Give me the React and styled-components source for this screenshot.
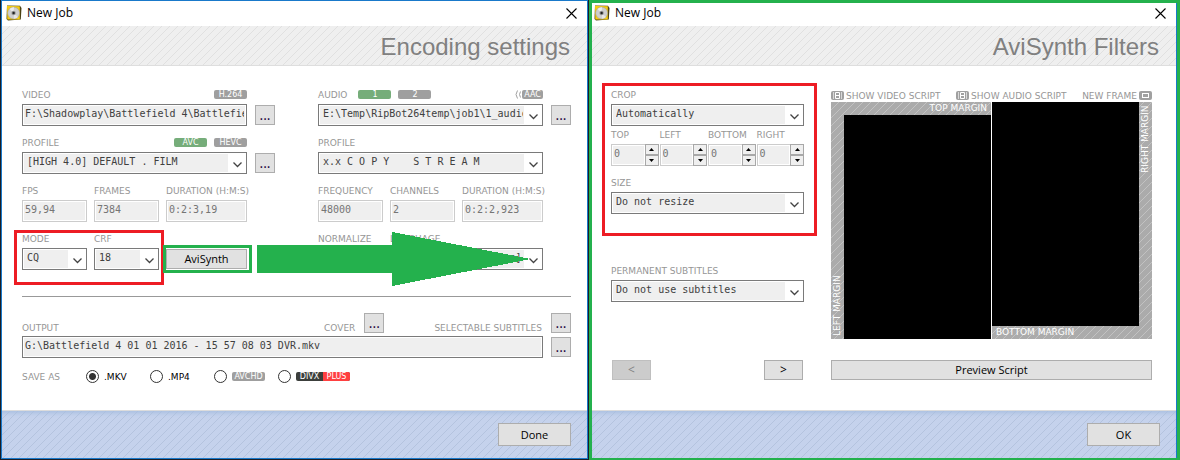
import styled, { createGlobalStyle, css } from "styled-components";

const App = () => {
  return (
    <>
      <GlobalStyle />
      <Desktop>
        <EncodingWindow />
        <FiltersWindow />
      </Desktop>
    </>
  );
};

const WindowBar = ({ compact }) => (
  <TitleBar $compact={compact}>
    <DiscIcon />
    <WindowName>New Job</WindowName>
    <CloseButton type="button" aria-label="Close">
      <svg width="11" height="11" viewBox="0 0 11 11">
        <path d="M0.5 0.5L10.5 10.5M10.5 0.5L0.5 10.5" stroke="#000" strokeWidth="1.1" />
      </svg>
    </CloseButton>
  </TitleBar>
);

const DiscIcon = () => (
  <svg width="16" height="16" viewBox="0 0 16 16" aria-hidden="true">
    <path d="M1 0.5L14 0.8L15.5 3L14.8 14.5L2 15.5L0.5 14Z" fill="#4a4012" />
    <path d="M1 0.8L13.8 1.2L13.8 14.4L1.3 14.6Z" fill="#f5cc14" />
    <circle cx="7.6" cy="8" r="6" fill="#cecece" stroke="#a09a80" strokeWidth="0.5" />
    <path d="M7.6 8L3.5 4A6 6 0 0 1 8 2.2Z" fill="#ececec" />
    <path d="M7.6 8L12 12A6 6 0 0 1 8 13.8Z" fill="#e6e6e6" />
    <circle cx="7.6" cy="8" r="2.2" fill="#9a9a9a" />
    <circle cx="7.6" cy="8" r="1.2" fill="#222" />
  </svg>
);

const Combo = ({ id, value, ...rest }) => (
  <ComboBox>
    <Select id={id} defaultValue={value} {...rest}>
      <option>{value}</option>
    </Select>
    <Chevron width="9" height="6" viewBox="0 0 9 6" aria-hidden="true">
      <path d="M0.5 0.5L4.5 4.5L8.5 0.5" fill="none" stroke="#444" strokeWidth="1.3" />
    </Chevron>
  </ComboBox>
);

const Readout = ({ id, label, value }) => (
  <Field>
    <LabelRow>
      <Label htmlFor={id}>{label}</Label>
    </LabelRow>
    <TextBox id={id} defaultValue={value} disabled />
  </Field>
);

const Spinner = ({ id, label }) => (
  <Field>
    <LabelRow>
      <Label htmlFor={id}>{label}</Label>
    </LabelRow>
    <SpinBox>
      <TextBox id={id} defaultValue="0" $muted />
      <SpinButton type="button" aria-label={`${label} up`}>
        <svg width="5" height="3" viewBox="0 0 5 3">
          <path d="M0 3L2.5 0L5 3Z" />
        </svg>
      </SpinButton>
      <SpinButton type="button" aria-label={`${label} down`}>
        <svg width="5" height="3" viewBox="0 0 5 3">
          <path d="M0 0L2.5 3L5 0Z" />
        </svg>
      </SpinButton>
    </SpinBox>
  </Field>
);

const ScriptIcon = ({ lines }) => (
  <svg width="13" height="9" viewBox="0 0 13 9" aria-hidden="true">
    <rect width="13" height="9" rx="2" fill="#a0a0a0" />
    {lines ? (
      <>
        <path d="M2.5 1V8M10.5 1V8" stroke="#d8d8d8" />
        <path d="M4.5 1.5H8.5V7.5H4.5ZM4.5 4.5H8.5" fill="none" stroke="#fff" />
      </>
    ) : (
      <rect x="3.5" y="2.5" width="6" height="4" fill="none" stroke="#fff" />
    )}
  </svg>
);

const EncodingWindow = () => (
  <EncodingFrame>
    <WindowBar />
    <Header>Encoding settings</Header>
    <EncodingBody>
      <Columns>
        <Settings>
          <BrowseRow>
            <Field>
              <LabelRow>
                <Label htmlFor="video">VIDEO</Label>
                <Badges>
                  <Badge>H.264</Badge>
                </Badges>
              </LabelRow>
              <TextBox id="video" defaultValue="F:\Shadowplay\Battlefield 4\Battlefield 4 01 01 2016.mp4" />
            </Field>
            <DotsButton type="button">...</DotsButton>
          </BrowseRow>
          <BrowseRow>
            <Field>
              <LabelRow>
                <Label htmlFor="profile">PROFILE</Label>
                <Badges>
                  <Badge as="button" type="button" $active>AVC</Badge>
                  <Badge as="button" type="button">HEVC</Badge>
                </Badges>
              </LabelRow>
              <Combo id="profile" value="[HIGH 4.0] DEFAULT . FILM" />
            </Field>
            <DotsButton type="button">...</DotsButton>
          </BrowseRow>
          <Triple>
            <Readout id="fps" label="FPS" value="59,94" />
            <Readout id="frames" label="FRAMES" value="7384" />
            <Readout id="duration" label="DURATION (H:M:S)" value="0:2:3,19" />
          </Triple>
          <Triple>
            <Highlighted>
              <Field>
                <LabelRow>
                  <Label htmlFor="mode">MODE</Label>
                </LabelRow>
                <Combo id="mode" value="CQ" />
              </Field>
              <Field>
                <LabelRow>
                  <Label htmlFor="crf">CRF</Label>
                </LabelRow>
                <Combo id="crf" value="18" />
              </Field>
            </Highlighted>
            <AviSynthCell>
              <Button type="button">AviSynth</Button>
              <Arrow viewBox="0 0 274 54" width="274" height="54" aria-hidden="true">
                <path d="M0 13H135V0L274 27L135 54V41H0Z" />
              </Arrow>
            </AviSynthCell>
          </Triple>
        </Settings>

        <Settings>
          <BrowseRow>
            <Field>
              <LabelRow>
                <Label htmlFor="audio">AUDIO</Label>
                <Tracks>
                  <Badge as="button" type="button" $active>1</Badge>
                  <Badge as="button" type="button">2</Badge>
                </Tracks>
                <Codec>
                  <svg width="6" height="9" viewBox="0 0 6 9" aria-hidden="true">
                    <path d="M2.5 0.5Q-0.5 4.5 2.5 8.5M5.5 1.5Q3.5 4.5 5.5 7.5" fill="none" stroke="#a0a0a0" />
                  </svg>
                  <Badge $narrow>AAC</Badge>
                </Codec>
              </LabelRow>
              <Combo id="audio" value="E:\Temp\RipBot264temp\job1\1_audio.aac" />
            </Field>
            <DotsButton type="button">...</DotsButton>
          </BrowseRow>
          <BrowseRow>
            <Field>
              <LabelRow>
                <Label htmlFor="audio-profile">PROFILE</Label>
              </LabelRow>
              <Combo id="audio-profile" value={"x.x C O P Y\u00a0\u00a0\u00a0\u00a0S T R E A M"} />
            </Field>
          </BrowseRow>
          <Triple>
            <Readout id="frequency" label="FREQUENCY" value="48000" />
            <Readout id="channels" label="CHANNELS" value="2" />
            <Readout id="audio-duration" label="DURATION (H:M:S)" value="0:2:2,923" />
          </Triple>
          <Triple>
            <Field>
              <LabelRow>
                <Label htmlFor="normalize">NORMALIZE</Label>
              </LabelRow>
              <Combo id="normalize" value="No" />
            </Field>
            <WideField>
              <LabelRow>
                <Label htmlFor="language">LANGUAGE</Label>
              </LabelRow>
              <Combo id="language" value={"English" + "\u00a0".repeat(10) + "[en]"} />
            </WideField>
          </Triple>
        </Settings>
      </Columns>

      <Divider />

      <OutputHead>
        <Label htmlFor="output">OUTPUT</Label>
        <OutputTools>
          <Label as="span">COVER</Label>
          <DotsButton type="button" aria-label="Cover">...</DotsButton>
        </OutputTools>
        <OutputTools>
          <Label as="span">SELECTABLE SUBTITLES</Label>
          <DotsButton type="button" aria-label="Selectable subtitles">...</DotsButton>
        </OutputTools>
      </OutputHead>
      <OutputRow>
        <TextBox id="output" defaultValue="G:\Battlefield 4 01 01 2016 - 15 57 08 03 DVR.mkv" />
        <DotsButton type="button">...</DotsButton>
      </OutputRow>
      <SaveAs role="radiogroup" aria-labelledby="save-as">
        <Label as="span" id="save-as">SAVE AS</Label>
        <Choice>
          <Radio type="radio" name="container" defaultChecked />
          .MKV
        </Choice>
        <Choice>
          <Radio type="radio" name="container" />
          .MP4
        </Choice>
        <Choice>
          <Radio type="radio" name="container" />
          <Badge>AVCHD</Badge>
        </Choice>
        <Choice>
          <Radio type="radio" name="container" />
          <DivxBadge>
            <span>DIVX</span>
            <span>PLUS</span>
          </DivxBadge>
        </Choice>
      </SaveAs>
    </EncodingBody>
    <Footer>
      <FooterButton type="button">Done</FooterButton>
    </Footer>
  </EncodingFrame>
);

const FiltersWindow = () => (
  <FiltersFrame>
    <WindowBar compact />
    <Header>AviSynth Filters</Header>
    <FiltersBody>
      <FilterColumn>
        <CropGroup>
          <Field>
            <LabelRow>
              <Label htmlFor="crop">CROP</Label>
            </LabelRow>
            <Combo id="crop" value="Automatically" />
          </Field>
          <SpinRow>
            <Spinner id="crop-top" label="TOP" />
            <Spinner id="crop-left" label="LEFT" />
            <Spinner id="crop-bottom" label="BOTTOM" />
            <Spinner id="crop-right" label="RIGHT" />
          </SpinRow>
          <Field>
            <LabelRow>
              <Label htmlFor="size">SIZE</Label>
            </LabelRow>
            <Combo id="size" value="Do not resize" />
          </Field>
        </CropGroup>
        <Field>
          <LabelRow>
            <Label htmlFor="subtitles">PERMANENT SUBTITLES</Label>
          </LabelRow>
          <Combo id="subtitles" value="Do not use subtitles" />
        </Field>
        <Pager>
          <Button type="button" disabled>&lt;</Button>
          <Button type="button">&gt;</Button>
        </Pager>
      </FilterColumn>

      <PreviewColumn>
        <ScriptRow>
          <ScriptButton type="button">
            <ScriptIcon lines />
            SHOW VIDEO SCRIPT
          </ScriptButton>
          <ScriptButton type="button">
            <ScriptIcon lines />
            SHOW AUDIO SCRIPT
          </ScriptButton>
          <ScriptButton type="button">
            NEW FRAME
            <ScriptIcon />
          </ScriptButton>
        </ScriptRow>
        <Preview>
          <LeftHalf>
            <TopMargin>TOP MARGIN</TopMargin>
            <SideMargin>LEFT MARGIN</SideMargin>
            <Screen />
          </LeftHalf>
          <RightHalf>
            <Screen />
            <SideMargin $end>RIGHT MARGIN</SideMargin>
            <BottomMargin>BOTTOM MARGIN</BottomMargin>
          </RightHalf>
        </Preview>
        <Button type="button">Preview Script</Button>
      </PreviewColumn>
    </FiltersBody>
    <Footer>
      <FooterButton type="button">OK</FooterButton>
    </Footer>
  </FiltersFrame>
);

const GlobalStyle = createGlobalStyle`
  * {
    box-sizing: border-box;
  }

  body {
    margin: 0;
    background: #1b1e26;
    font-family: "Open Sans", "Noto Sans", sans-serif;
  }

  button,
  input,
  select {
    margin: 0;
    border-radius: 0;
  }
`;

const stripes = (color) => css`
  background-image: linear-gradient(
    135deg,
    transparent 46%,
    ${color} 46%,
    ${color} 54%,
    transparent 54%
  );
  background-size: 8px 8px;
`;

const tinyText = css`
  font-family: "DejaVu Sans", sans-serif;
  font-size: 9px;
  line-height: 10px;
  white-space: nowrap;
`;

const Desktop = styled.main`
  display: grid;
  grid-template-columns: 589fr 591fr;
  min-height: 100vh;
`;

const Frame = styled.section`
  display: flex;
  flex-direction: column;
  min-width: 0;
  background: #fff;
`;

const EncodingFrame = styled(Frame)`
  margin: 0 1px 1px;
  border: 1px solid #1979ca;
`;

const FiltersFrame = styled(Frame)`
  border: solid #24b14d;
  border-width: 3px 3px 2px;
  box-shadow: inset -1px 0 #1979ca;
  padding-right: 1px;
`;

const TitleBar = styled.header`
  display: flex;
  align-items: center;
  height: ${(p) => (p.$compact ? 23 : 25)}px;
  padding: 0 10px ${(p) => (p.$compact ? 3 : 1)}px ${(p) => (p.$compact ? 2 : 4)}px;
`;

const WindowName = styled.span`
  flex: 1;
  margin-left: 5px;
  font-size: 12px;
  line-height: 16px;
  color: #000;
`;

const CloseButton = styled.button`
  display: flex;
  padding: 0;
  border: 0;
  background: none;
`;

const Header = styled.h1`
  margin: 0;
  height: 40px;
  padding-right: 17px;
  border-bottom: 1px solid #dedede;
  background-color: #efefef;
  ${stripes("#e0e0e0")}
  font-family: "Liberation Sans", Arial, sans-serif;
  font-size: 24px;
  font-weight: 400;
  line-height: 42px;
  text-align: right;
  color: #808080;
`;

const EncodingBody = styled.div`
  flex: 1;
  padding: 22px 16px 27px 20px;
`;

const Columns = styled.div`
  display: grid;
  grid-template-columns: 1fr 1fr;
  gap: 43px;
`;

const Settings = styled.div`
  display: flex;
  flex-direction: column;
  gap: 10px;
  min-width: 0;
`;

const BrowseRow = styled.div`
  display: grid;
  grid-template-columns: 1fr 20px;
  gap: 8px;
  align-items: end;

  & > button {
    margin-bottom: 1px;
  }
`;

const Triple = styled.div`
  display: grid;
  grid-template-columns: 65fr 65fr 81fr;
  gap: 7px;
  padding-right: 28px;
`;

const Field = styled.div`
  min-width: 0;
`;

const WideField = styled(Field)`
  grid-column: span 2;
`;

const Highlighted = styled.div`
  position: relative;
  grid-column: span 2;
  display: grid;
  grid-template-columns: 1fr 1fr;
  gap: 7px;

  &::after {
    content: "";
    position: absolute;
    inset: -2px -5px -15px -8px;
    border: 3px solid #ed1c24;
    pointer-events: none;
  }
`;

const LabelRow = styled.div`
  display: flex;
  align-items: flex-end;
  height: 16px;
  padding-bottom: 4px;
`;

const Label = styled.label`
  ${tinyText}
  color: #969696;
`;

const Badges = styled.div`
  display: flex;
  gap: 7px;
  margin-left: auto;
  padding-bottom: 1px;
`;

const Tracks = styled(Badges)`
  margin-left: 11px;
`;

const Codec = styled(Badges)`
  gap: 1px;
`;

const Badge = styled.span`
  ${tinyText}
  width: ${(p) => (p.$narrow ? 21 : 33)}px;
  height: 9px;
  padding: 0;
  border: 0;
  border-radius: 2px;
  background: ${(p) => (p.$active ? "#76ad7a" : "#9f9f9f")};
  color: #fff;
  font-size: 8px;
  line-height: 9px;
  text-align: center;
`;

const DivxBadge = styled.span`
  display: flex;
  flex: none;
  border-radius: 2px;
  overflow: hidden;
  background: #3c3f3c;
  color: #fff;
  font-size: 8px;
  line-height: 9px;

  span {
    flex: none;
    width: 27px;
    text-align: center;
  }

  span:last-child {
    background: #ff4040;
  }
`;

const entryText = css`
  font-family: "DejaVu Sans Mono", monospace;
  font-size: 10px;
  line-height: 14px;
  color: #404040;
`;

const TextBox = styled.input`
  ${entryText}
  display: block;
  width: 100%;
  min-width: 0;
  height: 22px;
  padding: 0 2px 3px;
  border: 1px solid #7a7a7a;
  background: #efefef;
  box-shadow: inset 0 0 0 1px #fff;

  ${(p) =>
    (p.disabled || p.$muted) &&
    css`
      border-color: #ccc;
      color: #757575;
    `}
`;

const ComboBox = styled.div`
  display: grid;
  grid-template-columns: 1fr 17px;
  align-items: center;
  height: 22px;
  padding: 1px;
  border: 1px solid #7a7a7a;
  background: #fff;
`;

const Select = styled.select`
  ${entryText}
  grid-area: 1 / 1 / 2 / 3;
  width: 100%;
  min-width: 0;
  height: 18px;
  padding: 0 18px 3px 3px;
  border: 0;
  appearance: none;
  background: linear-gradient(#efefef, #efefef) 0 0 / calc(100% - 17px) 100% no-repeat;
`;

const Chevron = styled.svg`
  grid-area: 1 / 2 / 2 / 3;
  justify-self: end;
  margin: 3px 3px 0 0;
  pointer-events: none;
`;

const Button = styled.button`
  height: 20px;
  padding: 0;
  border: 1px solid #adadad;
  background: #e1e1e1;
  font-family: inherit;
  font-size: 11px;
  line-height: 16px;
  color: #000;

  &:disabled {
    border-color: #bfbfbf;
    background: #ccc;
    color: #838383;
  }
`;

const DotsButton = styled(Button)`
  width: 20px;
  font-size: 14px;
  color: #1c0038;
`;

const AviSynthCell = styled.div`
  position: relative;
  display: grid;
  align-self: end;
  margin-bottom: 1px;

  &::after {
    content: "";
    position: absolute;
    inset: -4px -5px -4px -3px;
    border: 3px solid #24b14d;
    pointer-events: none;
  }
`;

const Arrow = styled.svg`
  position: absolute;
  z-index: 1;
  top: -17px;
  left: calc(100% + 10px);
  fill: #24b14d;
  shape-rendering: crispEdges;
  pointer-events: none;
`;

const Divider = styled.hr`
  margin: 26px 0 16px;
  border: 0;
  border-top: 1px solid #999;
`;

const OutputHead = styled.div`
  display: flex;
  align-items: center;
  margin-bottom: 3px;

  & > label {
    margin-right: auto;
    padding-top: 9px;
  }
`;

const OutputTools = styled.div`
  display: flex;
  gap: 9px;

  & + & {
    margin-left: 50px;
  }

  & > span {
    padding-top: 10px;
  }
`;

const OutputRow = styled.div`
  display: grid;
  grid-template-columns: 1fr 20px;
  gap: 8px;
  align-items: center;
`;

const SaveAs = styled.div`
  display: grid;
  grid-template-columns: repeat(5, 64px);
  align-items: center;
  margin-top: 12px;
`;

const Choice = styled.label`
  ${tinyText}
  display: flex;
  align-items: center;
  gap: 5px;
  color: #000;
`;

const Radio = styled.input`
  appearance: none;
  flex: none;
  width: 13px;
  height: 13px;
  border: 1px solid #333;
  border-radius: 50%;
  background: #fff;

  &:checked {
    background: radial-gradient(circle, #333 3px, #fff 4px);
  }
`;

const Footer = styled.footer`
  display: flex;
  justify-content: flex-end;
  padding: 12px 16px;
  border-top: 1px solid #dcdcdc;
  background-color: #c5d2ec;
  ${stripes("#b4c3de")}
  box-shadow: inset 0 4px 4px -2px #a9bfe0;
`;

const FooterButton = styled(Button)`
  width: 73px;
  height: 23px;
`;

const FiltersBody = styled.div`
  flex: 1;
  display: grid;
  grid-template-columns: 193fr 321fr;
  align-items: stretch;
  align-content: start;
  gap: 27px;
  padding: 22px 24px 30px 19px;
`;

const FilterColumn = styled.div`
  display: flex;
  flex-direction: column;
  min-width: 0;
`;

const CropGroup = styled.div`
  position: relative;
  margin-bottom: 50px;

  &::after {
    content: "";
    position: absolute;
    inset: -5px -13px -22px -9px;
    border: 3px solid #ed1c24;
    pointer-events: none;
  }
`;

const SpinRow = styled.div`
  display: grid;
  grid-template-columns: repeat(4, 1fr);
  gap: 1px;
  margin: 2px 0 10px;
`;

const SpinBox = styled.div`
  display: grid;
  grid-template-columns: 1fr 14px;
  grid-template-rows: 11px 11px;

  input {
    grid-row: span 2;
    border-right: 0;
  }
`;

const SpinButton = styled.button`
  display: flex;
  align-items: center;
  justify-content: center;
  padding: 0;
  border: 1px solid #a8a8a8;
  background: #efefef;
`;

const Pager = styled.div`
  display: flex;
  justify-content: space-between;
  margin-top: auto;
  padding: 0 1px;

  button {
    width: 39px;
    font-size: 12px;
  }
`;

const PreviewColumn = styled.div`
  display: flex;
  flex-direction: column;
  min-width: 0;
`;

const ScriptRow = styled.div`
  display: flex;
  justify-content: space-between;
  height: 14px;
  padding-top: 1px;
`;

const ScriptButton = styled.button`
  ${tinyText}
  display: flex;
  align-items: center;
  gap: 2px;
  padding: 0;
  border: 0;
  background: none;
  color: #969696;
`;

const Preview = styled.div`
  display: grid;
  grid-template-columns: 1fr 1fr;
  gap: 1px;
  aspect-ratio: 321 / 237;
  margin-bottom: 21px;
`;

const LeftHalf = styled.div`
  display: grid;
  grid-template: 13px 1fr / 13px 1fr;
  background-color: #ababab;
  ${stripes("#c2c2c2")}
`;

const RightHalf = styled(LeftHalf)`
  grid-template: 1fr 13px / 1fr 13px;
`;

const Screen = styled.div`
  background: #000;
`;

const marginText = css`
  ${tinyText}
  color: #fff;
  line-height: 13px;
`;

const TopMargin = styled.span`
  ${marginText}
  grid-column: 1 / -1;
  padding-right: 4px;
  text-align: right;
`;

const BottomMargin = styled.span`
  ${marginText}
  grid-column: 1 / -1;
  padding-left: 4px;
`;

const SideMargin = styled.span`
  ${marginText}
  writing-mode: vertical-rl;
  transform: rotate(180deg);
  padding: 3px 0;
  text-align: ${(p) => (p.$end ? "right" : "left")};
`;

export default App;
